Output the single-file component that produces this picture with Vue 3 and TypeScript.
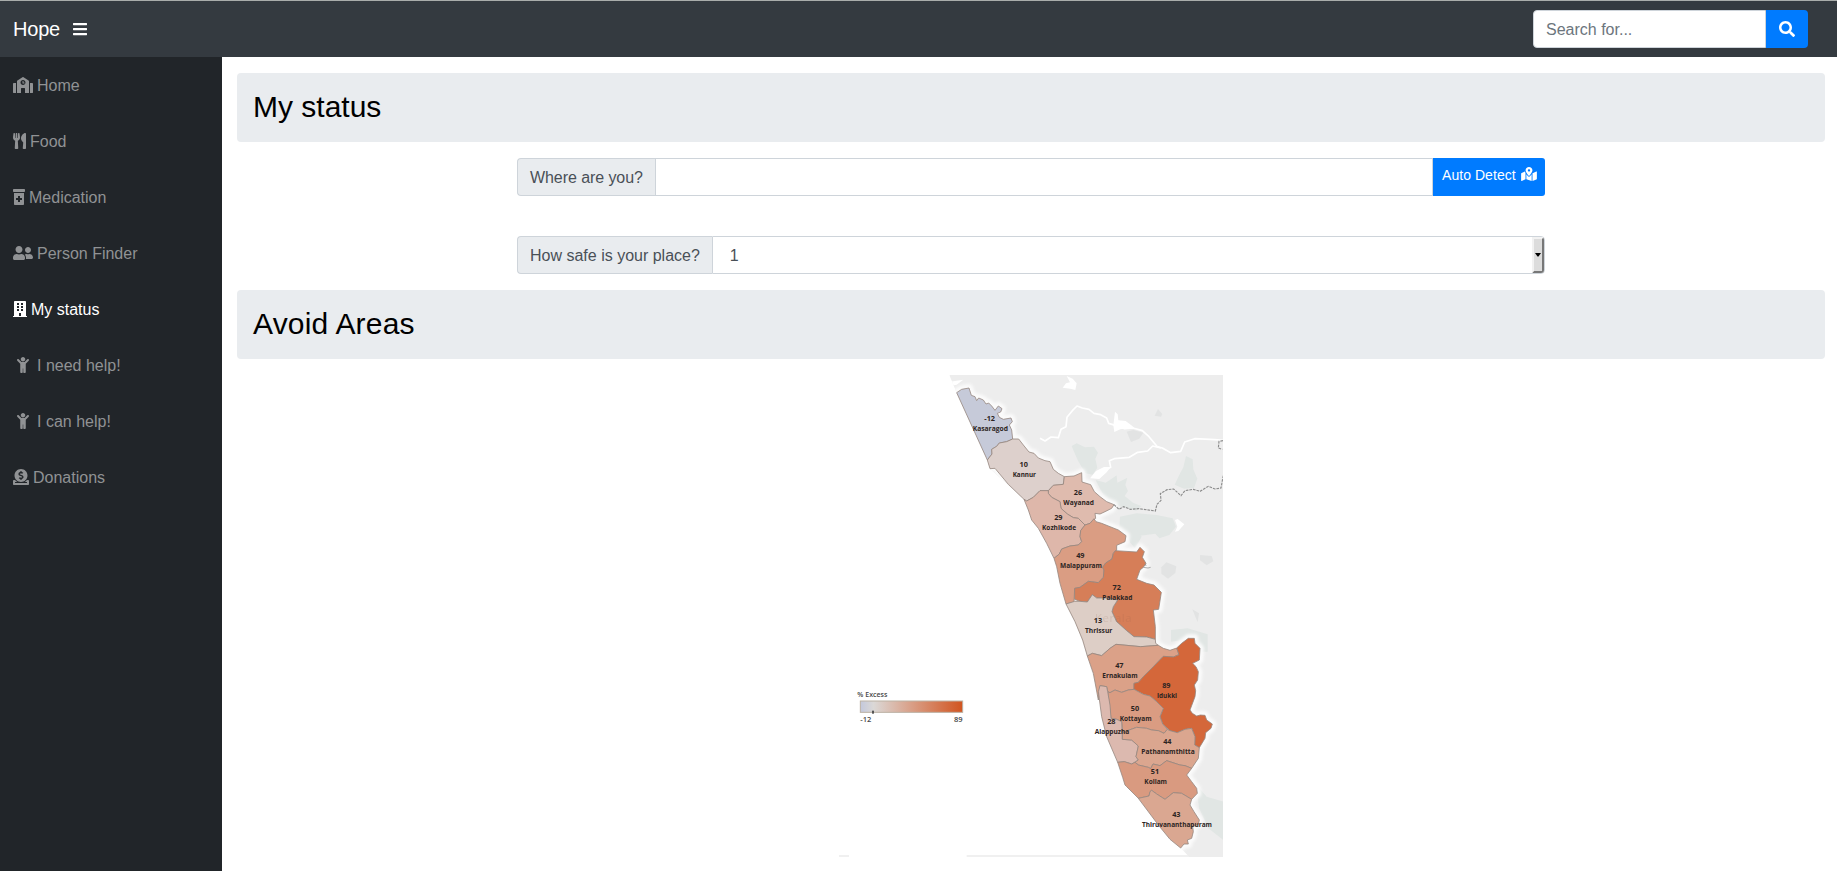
<script setup lang="ts">
import { ref } from 'vue'

interface Icon { w: number; box?: number; d: string }
interface NavItem { label: string; icon: Icon; active?: boolean }
interface District { name: string; value: number; x: number; y: number; w: number; fill: string; points: string }

const child: Icon = { w: 384, box: 640, d: 'M120 72c0-39.765 32.235-72 72-72s72 32.235 72 72c0 39.764-32.235 72-72 72s-72-32.236-72-72zm254.627 1.373c-12.496-12.497-32.758-12.497-45.254 0L242.745 160H141.254L54.627 73.373c-12.496-12.497-32.758-12.497-45.254 0-12.497 12.497-12.497 32.758 0 45.255L104 213.254V480c0 17.673 14.327 32 32 32h16c17.673 0 32-14.327 32-32V368h16v112c0 17.673 14.327 32 32 32h16c17.673 0 32-14.327 32-32V213.254l94.627-94.627c12.497-12.497 12.497-32.757 0-45.254z' }

const nav: NavItem[] = [
  { label: 'Home', icon: { w: 640, d: 'M0 224v272c0 8.84 7.16 16 16 16h80V192H32c-17.67 0-32 14.33-32 32zm360-48h-24v-40c0-4.42-3.58-8-8-8h-16c-4.42 0-8 3.58-8 8v64c0 4.42 3.58 8 8 8h48c4.42 0 8-3.58 8-8v-16c0-4.42-3.58-8-8-8zm137.75-63.96l-160-106.67a32.02 32.02 0 0 0-35.5 0l-160 106.67A32.002 32.002 0 0 0 128 138.66V512h128V368c0-8.84 7.16-16 16-16h96c8.84 0 16 7.16 16 16v144h128V138.67c0-10.7-5.35-20.69-14.25-26.63zM320 256c-44.18 0-80-35.82-80-80s35.82-80 80-80 80 35.82 80 80-35.82 80-80 80zm288-64h-64v320h80c8.84 0 16-7.16 16-16V224c0-17.67-14.33-32-32-32z' } },
  { label: 'Food', icon: { w: 416, d: 'M207.9 15.2c.8 4.7 16.1 94.5 16.1 128.8 0 52.3-27.8 89.6-68.9 104.6L168 486.7c.7 13.7-10.2 25.3-24 25.3H80c-13.7 0-24.7-11.5-24-25.3l12.9-238.1C27.7 233.6 0 196.2 0 144 0 109.6 15.3 19.9 16.1 15.2 19.3-5.1 61.4-5.4 64 16.3v141.2c1.3 3.4 15.1 3.2 16 0 1.4-25.3 7.9-139.2 8-141.8 3.3-20.8 44.7-20.8 47.9 0 .2 2.7 6.6 116.5 8 141.8.9 3.2 14.8 3.4 16 0V16.3c2.6-21.6 44.8-21.4 48-1.1zm119.2 285.7l-15 185.1c-1.2 14 9.9 26 23.9 26h56c13.3 0 24-10.7 24-24V24c0-13.2-10.7-24-24-24-82.5 0-221.4 178.5-64.9 300.9z' } },
  { label: 'Medication', icon: { w: 384, d: 'M360 0H24C10.8 0 0 10.8 0 24v48c0 13.2 10.8 24 24 24h336c13.2 0 24-10.8 24-24V24c0-13.2-10.8-24-24-24zM32 480c0 17.6 14.4 32 32 32h256c17.6 0 32-14.4 32-32V128H32v352zm64-184c0-4.4 3.6-8 8-8h56v-56c0-4.4 3.6-8 8-8h48c4.4 0 8 3.6 8 8v56h56c4.4 0 8 3.6 8 8v48c0 4.4-3.6 8-8 8h-56v56c0 4.4-3.6 8-8 8h-48c-4.4 0-8-3.6-8-8v-56h-56c-4.4 0-8-3.6-8-8v-48z' } },
  { label: 'Person Finder', icon: { w: 640, d: 'M192 256c61.9 0 112-50.1 112-112S253.9 32 192 32 80 82.1 80 144s50.1 112 112 112zm76.8 32h-8.3c-20.8 10-43.9 16-68.5 16s-47.6-6-68.5-16h-8.3C51.6 288 0 339.6 0 403.2V432c0 26.5 21.5 48 48 48h288c26.5 0 48-21.5 48-48v-28.8c0-63.6-51.6-115.2-115.2-115.2zM480 256c53 0 96-43 96-96s-43-96-96-96-96 43-96 96 43 96 96 96zm48 32h-3.8c-13.9 4.8-28.6 8-44.2 8s-30.3-3.2-44.2-8H432c-20.4 0-39.2 5.9-55.7 15.4 24.4 26.3 39.7 61.2 39.7 99.8v38.4c0 2.2-.5 4.3-.6 6.4H592c26.5 0 48-21.5 48-48 0-61.9-50.1-112-112-112z' } },
  { label: 'My status', active: true, icon: { w: 448, d: 'M436 480h-20V24c0-13.255-10.745-24-24-24H56C42.745 0 32 10.745 32 24v456H12c-6.627 0-12 5.373-12 12v20h448v-20c0-6.627-5.373-12-12-12zM128 64h64v64h-64zM256 64h64v64h-64zM128 160h64v64h-64zM256 160h64v64h-64zM128 256h64v64h-64zM256 256h64v64h-64zM192 384h64v96h-64z' } },
  { label: 'I need help!', icon: child },
  { label: 'I can help!', icon: child },
  { label: 'Donations', icon: { w: 512, d: 'M256 416c114.9 0 208-93.1 208-208S370.9 0 256 0 48 93.1 48 208s93.1 208 208 208zM233.8 97.4V80.6c0-9.2 7.4-16.6 16.6-16.6h11.1c9.2 0 16.6 7.4 16.6 16.6v17c15.5.8 30.5 6.1 43 15.4 5.6 4.1 6.2 12.3 1.2 17.1L306 145.6c-3.8 3.7-9.5 3.8-14 1-5.4-3.4-11.4-5.1-17.8-5.1h-38.9c-9 0-16.3 8.2-16.3 18.3 0 8.2 5 15.5 12.1 17.6l62.3 18.7c25.7 7.7 43.7 32.4 43.7 60.1 0 34-26.4 61.5-59.1 62.4v16.8c0 9.2-7.4 16.6-16.6 16.6h-11.1c-9.2 0-16.6-7.4-16.6-16.6v-17c-15.5-.8-30.5-6.1-43-15.4-5.6-4.1-6.2-12.3-1.2-17.1l16.3-15.5c3.8-3.7 9.5-3.8 14-1 5.4 3.4 11.4 5.1 17.8 5.1h38.9c9 0 16.3-8.2 16.3-18.3 0-8.2-5-15.5-12.1-17.6l-62.3-18.7c-25.7-7.7-43.7-32.4-43.7-60.1.1-34 26.4-61.5 59.1-62.4zM480 352h-32.5c-19.6 26-44.6 47.7-73 64h63.8c5.3 0 9.6 3.6 9.6 8v16c0 4.4-4.3 8-9.6 8H73.6c-5.3 0-9.6-3.6-9.6-8v-16c0-4.4 4.3-8 9.6-8h63.8c-28.4-16.3-53.3-38-73-64H32c-17.7 0-32 14.3-32 32v96c0 17.7 14.3 32 32 32h448c17.7 0 32-14.3 32-32v-96c0-17.7-14.3-32-32-32z' } },
]

const districts: District[] = [
  { name: 'Kasaragod', value: -12, x: 181, y: 182, w: 106, fill: '#c6cad9', points: '80,68 95,58 117,54 124,76 135,80 140,92 146,84 160,90 168,102 176,99 185,108 195,121 205,108 216,116 212,126 202,130 208,142 220,148 243,144 247,155 238,165 245,180 248,207 230,215 208,219 200,229 185,238 186,252 172,270' },
  { name: 'Kannur', value: 10, x: 283, y: 320, w: 70, fill: '#ddd0cc', points: '172,270 186,252 185,238 200,229 208,219 230,215 248,207 266,207 280,225 297,246 312,250 325,264 345,272 360,275 370,298 385,310 403,320 400,343 370,346 355,362 330,362 310,382 290,393 282,388 235,343 195,295 180,296' },
  { name: 'Wayanad', value: 26, x: 446, y: 404, w: 92, fill: '#dfbbae', points: '403,320 432,318 455,308 456,336 482,344 493,365 510,380 530,395 552,404 545,415 525,425 510,432 495,430 497,445 480,460 465,465 445,445 430,443 412,432 393,415 390,395 365,382 355,370 355,362 370,346 400,343' },
  { name: 'Kozhikode', value: 29, x: 387, y: 481, w: 102, fill: '#deb7aa', points: '282,388 290,393 310,382 330,362 355,362 355,370 365,382 390,395 393,415 412,432 430,443 445,445 465,465 452,482 450,500 455,515 445,525 420,528 395,537 388,552 372,565 350,520 325,475 305,450 295,420' },
  { name: 'Malappuram', value: 49, x: 453, y: 594, w: 126, fill: '#da9d83', points: '492,446 480,460 465,465 452,482 450,500 455,515 445,525 420,528 395,537 388,552 372,565 380,590 390,640 408,702 432,696 434,655 450,652 475,634 505,638 520,622 522,600 518,592 527,579 546,567 550,550 560,540 560,526 585,515 588,497 565,480 540,470 515,460 498,455' },
  { name: 'Palakkad', value: 72, x: 562, y: 690, w: 90, fill: '#d67e58', points: '556,542 620,546 630,532 643,545 637,562 648,580 640,592 630,600 620,628 650,640 672,645 694,667 686,718 670,720 676,770 676,808 650,801 612,800 590,782 560,755 546,725 550,710 563,690 530,684 500,684 487,674 472,696 450,694 434,688 434,655 450,652 475,634 505,638 520,622 522,600 518,592 527,579 546,567 550,550' },
  { name: 'Thrissur', value: 13, x: 506, y: 788, w: 82, fill: '#ddcec6', points: '408,702 434,694 450,694 472,696 487,674 500,684 530,684 563,690 550,710 546,725 560,755 590,782 612,800 650,801 676,808 677,820 685,826 632,830 558,823 540,835 515,857 487,850 472,858 458,810 435,755' },
  { name: 'Ernakulam', value: 47, x: 570, y: 924, w: 106, fill: '#dba188', points: '472,858 487,850 515,857 540,835 558,823 632,830 685,826 700,835 720,841 740,834 747,854 730,861 700,859 670,890 640,920 625,937 612,940 612,958 595,960 575,967 555,960 540,968 533,965 530,950 510,947 505,990 490,910' },
  { name: 'Idukki', value: 89, x: 711, y: 985, w: 60, fill: '#d4673a', points: '740,834 755,820 775,805 793,805 795,820 810,835 808,870 788,880 798,890 805,905 803,930 793,945 797,962 795,980 780,1020 787,1030 800,1038 811,1035 825,1036 830,1050 847,1062 843,1075 827,1088 825,1105 808,1133 794,1125 795,1100 785,1075 765,1078 742,1088 720,1082 698,1062 690,1040 700,1015 680,995 660,978 640,973 612,958 612,940 625,937 640,920 670,890 700,859 730,861 747,854' },
  { name: 'Kottayam', value: 50, x: 617, y: 1053, w: 96, fill: '#da9c82', points: '533,965 540,968 555,960 575,967 595,960 612,958 640,973 660,978 680,995 700,1015 690,1040 698,1062 712,1078 702,1090 685,1082 665,1080 650,1075 620,1072 595,1081 578,1088 575,1055 560,1048 543,1045 538,1005' },
  { name: 'Alappuzha', value: 28, x: 546, y: 1093, w: 104, fill: '#dcb9af', points: '510,947 530,950 533,965 540,1005 543,1045 560,1048 575,1055 577,1108 605,1110 625,1128 618,1160 625,1170 605,1182 583,1175 563,1177 530,1100 515,1040 505,965' },
  { name: 'Pathanamthitta', value: 44, x: 714, y: 1153, w: 160, fill: '#dba68f', points: '577,1108 578,1088 595,1081 620,1072 650,1075 665,1080 685,1082 702,1090 712,1078 720,1082 742,1088 765,1078 785,1075 795,1100 794,1125 808,1133 805,1165 785,1195 765,1187 750,1185 710,1172 690,1187 669,1182 662,1196 655,1192 625,1185 615,1177 625,1170 618,1160 625,1128 605,1110' },
  { name: 'Kollam', value: 51, x: 677, y: 1242, w: 68, fill: '#d99a80', points: '563,1177 583,1175 605,1182 615,1177 625,1185 655,1192 662,1196 669,1182 690,1187 710,1172 750,1185 765,1187 785,1195 770,1215 785,1235 800,1255 802,1270 785,1288 755,1270 730,1268 705,1288 680,1272 665,1261 660,1265 657,1278 625,1285 590,1250 585,1245 578,1222' },
  { name: 'Thiruvananthapuram', value: 43, x: 741, y: 1371, w: 210, fill: '#daa791', points: '625,1285 657,1278 660,1265 665,1261 680,1272 705,1288 730,1268 755,1270 785,1288 780,1305 792,1325 808,1350 805,1363 788,1370 790,1385 785,1405 772,1410 775,1422 762,1422 752,1434 720,1408 685,1365' },
]

const search = ref('')
const place = ref('')
const safety = ref('1')
</script>

<template>
  <div class="page">
    <nav class="topbar">
      <a class="brand">Hope</a>
      <svg class="bars" viewBox="0 0 448 512"><path d="M16 132h416c8.837 0 16-7.163 16-16V76c0-8.837-7.163-16-16-16H16C7.163 60 0 67.163 0 76v40c0 8.837 7.163 16 16 16zm0 160h416c8.837 0 16-7.163 16-16v-40c0-8.837-7.163-16-16-16H16c-8.837 0-16 7.163-16 16v40c0 8.837 7.163 16 16 16zm0 160h416c8.837 0 16-7.163 16-16v-40c0-8.837-7.163-16-16-16H16c-8.837 0-16 7.163-16 16v40c0 8.837 7.163 16 16 16z" /></svg>
      <form class="search" @submit.prevent>
        <input v-model="search" type="text" placeholder="Search for..." />
        <button type="submit" aria-label="Search">
          <svg viewBox="0 0 512 512"><path d="M505 442.7L405.3 343c-4.5-4.5-10.6-7-17-7H372c27.6-35.3 44-79.7 44-128C416 93.1 322.9 0 208 0S0 93.1 0 208s93.1 208 208 208c48.3 0 92.7-16.4 128-44v16.3c0 6.4 2.5 12.5 7 17l99.7 99.7c9.4 9.4 24.6 9.4 33.9 0l28.3-28.3c9.4-9.4 9.4-24.6.1-34zM208 336c-70.7 0-128-57.2-128-128 0-70.7 57.2-128 128-128 70.7 0 128 57.2 128 128 0 70.7-57.2 128-128 128z" /></svg>
        </button>
      </form>
    </nav>

    <div class="body">
      <ul class="sidebar">
        <li v-for="item in nav" :key="item.label" :class="{ active: item.active }">
          <svg
            :viewBox="`${(item.icon.w - (item.icon.box ?? item.icon.w)) / 2} 0 ${item.icon.box ?? item.icon.w} 512`"
            :style="{ width: `${(item.icon.box ?? item.icon.w) / 32}px` }"
          ><path fill-rule="evenodd" :d="item.icon.d" /></svg>
          <span>{{ item.label }}</span>
        </li>
      </ul>

      <main class="content">
        <h2 class="heading">My status</h2>

        <div class="group">
          <label class="addon where" for="place">Where are you?</label>
          <input id="place" v-model="place" type="text" />
          <button class="detect" type="button">
            Auto Detect
            <svg viewBox="0 0 576 512"><path d="M288 0c-69.59 0-126 56.41-126 126 0 56.26 82.35 158.8 113.9 196.02 6.39 7.54 17.82 7.54 24.2 0C331.65 284.8 414 182.26 414 126 414 56.41 357.59 0 288 0zm0 168c-23.2 0-42-18.8-42-42s18.8-42 42-42 42 18.8 42 42-18.8 42-42 42zM20.12 215.95A32.006 32.006 0 0 0 0 245.66v250.32c0 11.32 11.43 19.06 21.94 14.86L160 448V214.92c-8.84-15.98-16.07-31.54-21.25-46.42L20.12 215.95zM288 359.67c-14.07 0-27.38-6.18-36.51-16.96-19.66-23.2-40.57-49.62-59.49-76.72v182l192 64V266c-18.92 27.09-39.82 53.52-59.49 76.72-9.13 10.77-22.44 16.95-36.51 16.95zm266.06-198.51L416 224v288l139.88-55.95A31.996 31.996 0 0 0 576 426.34V176.02c0-11.32-11.43-19.06-21.94-14.86z" /></svg>
          </button>
        </div>

        <div class="group second">
          <span class="addon">How safe is your place?</span>
          <div class="select" role="listbox">
            <span>{{ safety }}</span>
            <i class="arrow"><svg viewBox="0 0 6 4"><path d="M0 0h6L3.5 3.5h-1z" /></svg></i>
          </div>
        </div>

        <h2 class="heading areas">Avoid Areas</h2>

        <svg class="map" viewBox="-273 15 1152 1449">
          <defs>
            <linearGradient id="excess">
              <stop offset="0" stop-color="#c3c8dc" />
              <stop offset=".13" stop-color="#dbd8d6" />
              <stop offset=".5" stop-color="#d99f87" />
              <stop offset="1" stop-color="#d1541f" />
            </linearGradient>
            <filter id="soft"><feGaussianBlur stdDeviation="5" /></filter>
            <clipPath id="land"><path d="M58 15 80 68 172 270 180 296 282 388 372 565 472 858 563 1177 625 1285 752 1434 778 1461H879V15z" /></clipPath>
          </defs>

          <g clip-path="url(#land)">
            <rect x="0" y="0" width="900" height="1480" fill="#ededed" />
            <g fill="#e1e6e4">
              <path d="M425 228l15-8 25 12 27-2 12 18-8 18 6 28-14 20-22-4-22-38-10-22z" />
              <path d="M497 330l30 8 18-12 15-10 2 22 30-15-6 22 8 18-10 15 25 20 25 10-15 14-45-12-45-20-20-35z" />
              <path d="M768 258l20 10 2 30 12 28-10 28-30 2-28-12 14-30 12-22z" />
              <path d="M570 440l50-10 60 5 48 10 10 25-20 25-30 10-12-14-28 4-50 5-30-25z" />
              <path d="M590 485l30-5 15 20-20 35-15-18z" />
              <path d="M723 780l50-5 60 18v52h-30l-25-38-55 8z" />
              <path d="M800 1245l30 35 50 15v115l-45-35-28-60z" />
            </g>
            <g fill="#e2e3e3">
              <path d="M590 185l20-5 30 8-12 18-25 10z" /><path d="M674 137l10-20 13 15-4 8z" />
              <path d="M694 592l15-15 30 12-3 20-22 17-20-15z" /><path d="M810 555l35 3 5 16-20 12-20-15z" />
              <path d="M787 718l20 12-4 26-8-18z" />
            </g>
            <g fill="none" stroke="#fff" stroke-linejoin="round">
              <path stroke-width="5" d="M330 205l15 8 18-12 22 2 8-25 15-8 3-28 16-20 14-14 16 6 20 4 15 12 20 4 18 10 6 16 20 6 28 10 25-2 28 8 20 18 25 30 15 4 25 14 30-4 12-28 30-10 60 3 27 2" />
              <path stroke-width="5" d="M500 322l20-20 22-10-4-20 15-6 45-4 25-15 30-4 15-15 25 6" />
            </g>
            <path fill="#fff" d="M410 18l18 8 12 14-4 20-15-4-23-3 10-13 12-3zM480 325l18-22 24-12 20 0-12 16-22 20zM555 125l8 8 2 18 22 2 20 15 10 10-22-4-24 4-18 8-3-20zM735 450l8-3 20 16-18 20-10 2 7-15zM60 35l40-6-20 15-18 4z" />
            <g filter="url(#soft)" fill="none" stroke="#fbfbfb" stroke-width="24" stroke-linejoin="round">
              <polygon v-for="d in districts" :key="d.name" :points="d.points" />
            </g>
            <path class="dash" d="M552 404l15 14 14-8 20 8 25-2 50 7 5-20 12-12-2-20 20-12 20-2 22 20 12-15 25-4 20 6 25-15 20 8 18-3 4-22 6-30 10-5" />
            <path class="dash" d="M879 212l-12 2-2 20 12 4" />
          </g>

          <polygon
            v-for="d in districts" :key="d.name" :points="d.points" :fill="d.fill"
            stroke="#96867f" stroke-width="2.4" stroke-linejoin="round"
          />
          <path fill="none" stroke="#888" stroke-width="2" d="M640 592l14 2 8-2M648 588l-2-7" />
          <text class="region" x="550" y="757" text-anchor="middle" textLength="110">Kerala</text>

          <g class="label" text-anchor="middle">
            <template v-for="d in districts" :key="d.name">
              <text
                :x="d.x - 2" :y="d.y - 30"
                :textLength="d.value < 0 ? 32 : 25" lengthAdjust="spacingAndGlyphs"
              >{{ d.value }}</text>
              <text :x="d.x" :y="d.y" :textLength="d.w" lengthAdjust="spacingAndGlyphs">{{ d.name }}</text>
            </template>
          </g>

          <g class="legend">
            <text x="-218" y="980" textLength="90" lengthAdjust="spacingAndGlyphs">% Excess</text>
            <rect x="-209" y="993" width="307" height="34" fill="url(#excess)" stroke="#bbb1a3" stroke-width="3" />
            <rect x="-174" y="1022" width="6" height="9" fill="#555" />
            <text x="-209" y="1055" textLength="33" lengthAdjust="spacingAndGlyphs">-12</text>
            <text x="72" y="1055" textLength="26" lengthAdjust="spacingAndGlyphs">89</text>
          </g>
          <path stroke="#ececec" stroke-width="4" d="M-273 1458h30M110 1458h670" />
        </svg>
      </main>
    </div>
  </div>
</template>

<style>
body { margin: 0; background: #fff; }
</style>

<style scoped>
* { box-sizing: border-box; }
.page {
  height: 871px;
  overflow: hidden;
  display: flex;
  flex-direction: column;
  border-top: 1px solid #a9adab;
  font: 16px/24px "Liberation Sans", Arial, sans-serif;
  color: #212529;
}
.topbar {
  height: 56px;
  flex: none;
  display: flex;
  align-items: center;
  padding: 0 29px 0 13px;
  background: #343a40;
  color: #fff;
}
.brand { width: 47px; font-size: 20px; line-height: 30px; letter-spacing: -.2px; }
.bars { width: 14px; height: 16px; margin-left: 12.5px; fill: #fff; }
.search { display: flex; width: 275px; height: 38px; margin-left: auto; }
input {
  flex: 1;
  min-width: 0;
  padding: 7px 12px 5px;
  border: 1px solid #ced4da;
  font: inherit;
  color: #495057;
  background: #fff;
  outline: 0;
}
input::placeholder { color: #6c757d; opacity: 1; }
.search input { border-radius: 4px 0 0 4px; }
.search button {
  width: 42px;
  padding: 0;
  border: 0;
  border-radius: 0 4px 4px 0;
  background: #007bff;
  display: flex;
  align-items: center;
  justify-content: center;
}
.search svg { width: 16px; height: 16px; fill: #fff; }
.body { flex: 1; min-height: 0; display: flex; }
.sidebar {
  width: 222px;
  flex: none;
  margin: 0;
  padding: 0;
  list-style: none;
  background: #212529;
}
.sidebar li {
  height: 56px;
  padding: 0 13px;
  display: flex;
  align-items: center;
  gap: 4px;
  color: #909294;
  fill: #909294;
}
.sidebar li.active { color: #fff; fill: #fff; }
.sidebar span { margin-top: 2px; }
.sidebar svg { height: 16px; flex: none; }
.content {
  flex: 1;
  min-width: 0;
  padding: 16px 12px 0 15px;
  display: flex;
  flex-direction: column;
}
.heading {
  flex: none;
  height: 69px;
  margin: 0 0 16px;
  padding: 0 16px;
  border-radius: 4px;
  background: #e9ecef;
  color: #000;
  font-size: 30px;
  font-weight: 400;
  line-height: 68px;
}
.areas { letter-spacing: .2px; }
.group {
  flex: none;
  display: flex;
  width: 1028px;
  height: 38px;
  margin-left: 280px;
}
.group.second { margin-top: 40px; margin-bottom: 16px; }
.addon {
  padding: 7px 12px 5px;
  border: 1px solid #ced4da;
  border-right: 0;
  border-radius: 4px 0 0 4px;
  background: #e9ecef;
  color: #495057;
  white-space: nowrap;
}
.where { width: 138px; letter-spacing: -.07px; }
.detect {
  width: 112px;
  padding: 7px 8px 0 9px;
  display: flex;
  align-items: flex-start;
  justify-content: space-between;
  border: 0;
  border-radius: 0 3px 3px 0;
  background: #007bff;
  color: #fff;
  font: 14px/21px "Liberation Sans", Arial, sans-serif;
  letter-spacing: .05px;
  white-space: nowrap;
}
.detect svg { width: 16px; height: 14px; margin-top: 2px; fill: #fff; }
.select {
  flex: 1;
  display: flex;
  justify-content: space-between;
  border: 1px solid #ced4da;
  border-radius: 0 4px 4px 0;
  color: #495057;
}
.select span { padding: 7px 17px 5px; }
.arrow {
  width: 12px;
  display: flex;
  align-items: center;
  justify-content: center;
  background: #dcdcdc;
  border: 2px solid;
  border-color: #f2f2f2 #777 #777 #f2f2f2;
  border-radius: 0 3px 3px 0;
}
.arrow svg { width: 6px; height: 4px; flex: none; }
.map { flex: none; width: 384px; height: 483px; align-self: center; }
.label, .legend { font: 700 21px "Open Sans", "Noto Sans", sans-serif; fill: #2c2422; }
.legend { font-weight: 600; fill: #484848; }
.region { font: 34px "Open Sans", sans-serif; fill: #8a5a45; opacity: .14; }
.dash { fill: none; stroke: #8c8c8c; stroke-width: 3.4; stroke-dasharray: 8 3; }
</style>
